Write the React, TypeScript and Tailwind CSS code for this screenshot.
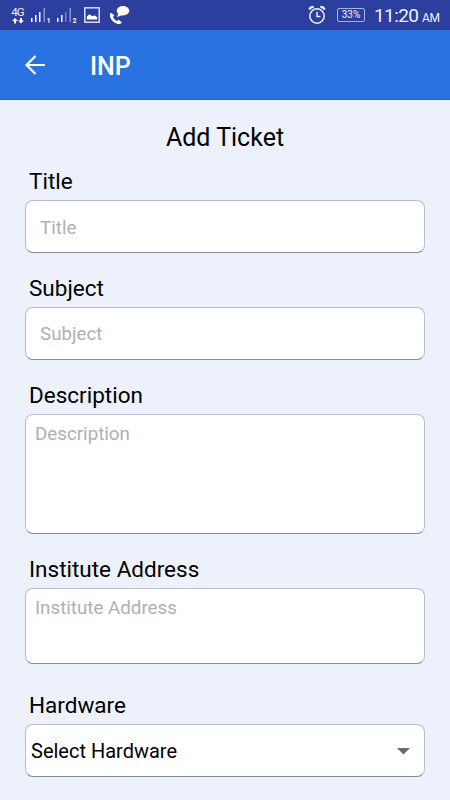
import type { ReactNode } from "react";

function SignalIcon({ strong, sim }: { strong: number; sim: string }) {
  return (
    <svg width="21" height="18" viewBox="0 0 21 18" aria-hidden="true">
      <rect x="0" y="12" width="1.500" height="4" fill="#fff" />
      <rect x="4" y="9" width="1.500" height="7" fill="#fff" />
      <rect
        x="8"
        y="6"
        width="1.500"
        height="10"
        fill={strong > 2 ? "#fff" : "#7582cc"}
      />
      <rect x="12.500" y="2" width="1.500" height="14" fill="#8994d6" />
      <text
        x="15.8"
        y="17"
        fontSize="6.5"
        fontWeight="700"
        fill="#fff"
        fontFamily="Roboto, sans-serif"
      >
        {sim}
      </text>
    </svg>
  );
}

function StatusBar() {
  return (
    <div className="flex h-[30px] items-center justify-between bg-[#2d3f9e] pr-[10px] pl-[11px] text-[#f0f2fd]">
      <div className="flex items-center">
        <div className="flex w-[13px] flex-col items-center">
          <span className="text-[11.5px] leading-[11px] tracking-[-1px]">
            4G
          </span>
          <svg width="12" height="6" viewBox="0 0 12 6" aria-hidden="true">
            <path
              d="M3 0L0 3h2v2.6h2V3h2zM9 5.6l3-3h-2V0H8v2.6H6z"
              fill="#fff"
            />
          </svg>
        </div>
        <div className="ml-[7px] flex gap-[5px]">
          <SignalIcon strong={3} sim="1" />
          <SignalIcon strong={2} sim="2" />
        </div>
        <svg
          className="ml-[6px]"
          width="16"
          height="16"
          viewBox="0 0 16 16"
          aria-hidden="true"
        >
          <rect
            x="0.8"
            y="0.8"
            width="14.4"
            height="14.4"
            fill="none"
            stroke="#e6e9fb"
            strokeWidth="1.4"
          />
          <path
            d="M2.800 12.500V9.500C3.800 8.800 4.500 7.500 5.600 7.500s1.700 1.600 2.800 1.600 1.400-.6 2.200-.6 1.500 1.300 2.600 1.600v2.400z"
            fill="#fff"
          />
        </svg>
        <svg
          className="ml-[9px]"
          width="21"
          height="20"
          viewBox="0 0 21 20"
          aria-hidden="true"
        >
          <path
            d="M2.200 7.700C.9 8.400.6 10 1.100 11.800c1.200 4 4 6.400 7.800 7.200 1.600.3 3-.2 3.900-1.600l-3-2.700-2 1.300C6 15.300 4.700 13.800 4 11.800l1.500-1.400z"
            fill="#fff"
          />
          <ellipse cx="14" cy="5.700" rx="6.300" ry="4.700" fill="#fff" />
          <path d="M9.600 8.200L7.800 12.300 13.500 10z" fill="#fff" />
        </svg>
      </div>

      <div className="flex items-center">
        <svg width="18" height="20" viewBox="0 0 18 20" aria-hidden="true">
          <g fill="none" stroke="#f0f2fd">
            <circle cx="9" cy="11" r="7.2" strokeWidth="1.500" />
            <path d="M9 6.800v4.700h3.400" strokeWidth="1.400" />
            <path
              d="M1.300 4.600C2 3 3.800 1.800 5.700 1.900M16.700 4.600C16 3 14.200 1.800 12.300 1.900"
              strokeWidth="2.200"
            />
          </g>
        </svg>
        <div className="ml-[11px] flex h-[14px] w-[28px] items-center justify-center rounded-[2px] border border-[#a9b3e8] text-[10px] leading-none">
          33%
        </div>
        <span className="mt-[2px] ml-[9px] w-[45px] text-[19px] leading-[22px] tracking-[-0.6px]">
          11:20
        </span>
        <span className="mt-[5px] ml-[3px] w-[18px] text-[12px] leading-4 tracking-[-0.3px]">
          AM
        </span>
      </div>
    </div>
  );
}

function Header() {
  return (
    <header className="flex h-[70px] items-center border-b border-[#2366cf] bg-[#2872e1] pl-[25px] text-white">
      <button type="button" aria-label="Back">
        <svg width="21" height="20" viewBox="0 0 21 20" aria-hidden="true">
          <path
            d="M20 10H2M10.500 1L1.500 10l9 9"
            fill="none"
            stroke="#fff"
            strokeWidth="2.200"
          />
        </svg>
      </button>
      <h1 className="mt-[4px] ml-[44px] text-[25px] leading-[30px] font-medium">
        INP
      </h1>
    </header>
  );
}

function Field({
  label,
  className,
  children,
}: {
  label: string;
  className: string;
  children: ReactNode;
}) {
  return (
    <label className={`block ${className}`}>
      <span className="mb-[6px] block pl-1 text-[22.5px] leading-[26px]">
        {label}
      </span>
      {children}
    </label>
  );
}

const BOX =
  "w-full rounded-lg border border-[#b9bdc8] border-b-[#85888f] bg-white outline-none placeholder:text-[#b0b0b0]";

export default function App() {
  return (
    <div className="h-[800px] w-full overflow-hidden bg-[#ecf1fb] font-['Roboto',sans-serif] text-black">
      <StatusBar />
      <Header />
      <main className="px-[25px] pt-[22px]">
        <h2 className="text-center text-[25px] leading-8">Add Ticket</h2>
        <Field label="Title" className="mt-[14px]">
          <input
            className={`${BOX} block h-[53px] px-[14px] pt-[2px] text-[18.75px]`}
            placeholder="Title"
          />
        </Field>
        <Field label="Subject" className="mt-[22px]">
          <input
            className={`${BOX} block h-[53px] px-[14px] pt-px text-[18.75px]`}
            placeholder="Subject"
          />
        </Field>
        <Field label="Description" className="mt-[22px]">
          <textarea
            className={`${BOX} block h-[120px] resize-none overflow-hidden px-[9px] pt-[8px] text-[18.75px] leading-[22px]`}
            placeholder="Description"
          />
        </Field>
        <Field label="Institute Address" className="mt-[22px]">
          <textarea
            className={`${BOX} block h-[76px] resize-none overflow-hidden px-[9px] pt-[8px] text-[18.75px] leading-[22px]`}
            placeholder="Institute Address"
          />
        </Field>
        <Field label="Hardware" className="mt-[28px]">
          <button
            type="button"
            className={`${BOX} flex h-[53px] items-center justify-between pr-[14px] pl-[5px] text-[20px]`}
          >
            <span>Select Hardware</span>
            <svg
              className="mt-[2px]"
              width="13"
              height="7"
              viewBox="0 0 13 7"
              aria-hidden="true"
            >
              <path d="M0 0h13L6.500 6.500z" fill="#6b6b6b" />
            </svg>
          </button>
        </Field>
      </main>
    </div>
  );
}
